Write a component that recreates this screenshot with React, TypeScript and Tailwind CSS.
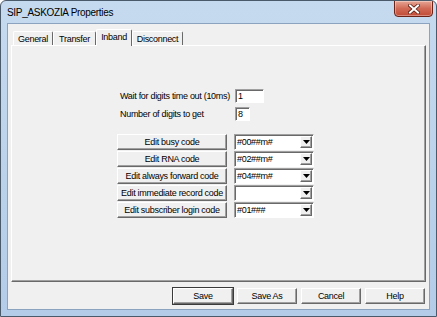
import React from "react";

const raised =
  "bg-[#f0f0f0] border-t border-l border-t-white border-l-white border-r border-b border-r-[#696969] border-b-[#696969] shadow-[inset_-1px_-1px_0_#a0a0a0]";
const sunken =
  "bg-white border-t border-l border-t-[#a0a0a0] border-l-[#a0a0a0] border-r border-b border-r-white border-b-white shadow-[inset_1px_1px_0_#696969]";

function Combo({ value }: { value: string }) {
  return (
    <div className={`${sunken} w-[80px] h-[16px] flex items-center pl-[2px] pr-[1px]`}>
      <div className="flex-1 text-[9px] tracking-[-0.3px] leading-none pt-[1px]">{value}</div>
      <div className={`${raised} w-[12px] h-[12px] flex items-center justify-center`}>
        <svg width="7" height="4" viewBox="0 0 7 4">
          <path d="M0 0 H7 L3.5 4 Z" fill="#000" />
        </svg>
      </div>
    </div>
  );
}

function EditBtn({ label }: { label: string }) {
  return (
    <div className={`${raised} w-[110px] h-[16px] flex items-center justify-center text-[9px] tracking-[-0.3px] leading-none`}>
      {label}
    </div>
  );
}

function Tab({ label, w, selected }: { label: string; w: number; selected?: boolean }) {
  return (
    <div
      style={{ width: w }}
      className={
        selected
          ? "h-[17px] -mb-px bg-[#f0f0f0] border-t border-l border-t-white border-l-white border-r border-r-[#696969] rounded-t-[2px] flex items-start justify-center pt-[2px] text-[9px] tracking-[-0.3px] leading-[11px] relative z-10"
          : "h-[14px] bg-[#f0f0f0] border-t border-l border-t-white border-l-white border-r border-r-[#696969] rounded-t-[2px] flex items-start justify-center pt-[2px] text-[9px] tracking-[-0.3px] leading-[11px]"
      }
    >
      {label}
    </div>
  );
}

function DlgBtn({ label, def }: { label: string; def?: boolean }) {
  return (
    <div
      className={`${raised} w-[60px] h-[16px] flex items-center justify-center text-[9px] tracking-[-0.3px] leading-none ${
        def ? "outline outline-1 outline-[#3a3a3a]" : ""
      }`}
    >
      {label}
    </div>
  );
}

export default function App() {
  return (
    <div className="w-[437px] h-[317px] font-['Liberation_Sans',Arial,sans-serif] text-black bg-white">
      <div className="w-[437px] h-[317px] flex flex-col rounded-t-[6px] border border-[#4b5a6b] bg-gradient-to-b from-[#c6daef] via-[#bcd3eb] to-[#b4cce8] overflow-hidden">
        {/* Title bar */}
        <div className="h-[22px] relative flex items-center pl-[6px] shrink-0">
          <span className="text-[10px] tracking-[-0.3px] leading-none text-black pt-[1px]">SIP_ASKOZIA Properties</span>
          <div className="absolute left-[393px] top-[-1px] w-[39px] h-[17px] rounded-b-[4px] border border-[#6b2318] bg-gradient-to-b from-[#e6a595] via-[#d06a56] to-[#c24b36] flex items-center justify-center shadow-[inset_0_0_0_1px_rgba(255,255,255,0.35)]">
            <svg width="12" height="10" viewBox="0 0 12 10">
              <path d="M2 1.5 L10 8.5 M10 1.5 L2 8.5" stroke="#5a1c12" strokeWidth="3.6" strokeLinecap="square" />
              <path d="M2 1.5 L10 8.5 M10 1.5 L2 8.5" stroke="#ffffff" strokeWidth="2" strokeLinecap="square" />
            </svg>
          </div>
        </div>
        {/* Client */}
        <div className="flex-1 px-[6px] pb-[6px]">
          <div className="w-full h-full border border-[#8ba3bf] bg-[#f0f0f0] flex flex-col">
            {/* Tabs */}
            <div className="h-[16px] mt-[5px] pl-[5px] flex items-end relative z-10">
              <Tab label="General" w={40} />
              <Tab label="Transfer" w={43} />
              <Tab label="Inband" w={36} selected />
              <Tab label="Disconnect" w={51} />
            </div>
            {/* Panel */}
            <div className="ml-[3px] w-[415px] h-[237px] bg-[#f0f0f0] border-t border-l border-t-white border-l-white border-r border-b border-r-[#696969] border-b-[#696969] shadow-[inset_-1px_-1px_0_#a0a0a0] pt-[43px]">
              <div className="pl-[108px] flex flex-col gap-[4px]">
                <div className="flex items-center h-[14px]">
                  <div className="w-[115px] text-[9px] tracking-[-0.3px] leading-none">Wait for digits time out (10ms)</div>
                  <div className={`${sunken} w-[29px] h-[14px] flex items-center pl-[2px] text-[9px] leading-none`}>1</div>
                </div>
                <div className="flex items-center h-[14px]">
                  <div className="w-[115px] text-[9px] tracking-[-0.3px] leading-none">Number of digits to get</div>
                  <div className={`${sunken} w-[15px] h-[14px] flex items-center pl-[2px] text-[9px] leading-none`}>8</div>
                </div>
              </div>
              <div className="pl-[105px] mt-[13px] flex flex-col gap-[1px]">
                {[
                  ["Edit busy code", "#00##m#"],
                  ["Edit RNA code", "#02##m#"],
                  ["Edit always forward code", "#04##m#"],
                  ["Edit immediate record code", ""],
                  ["Edit subscriber login code", "#01###"],
                ].map(([l, v]) => (
                  <div key={l} className="flex items-center gap-[7px]">
                    <EditBtn label={l} />
                    <Combo value={v} />
                  </div>
                ))}
              </div>
            </div>
            {/* Buttons */}
            <div className="mt-[6px] pr-[4px] flex justify-end gap-[4px]">
              <DlgBtn label="Save" def />
              <DlgBtn label="Save As" />
              <DlgBtn label="Cancel" />
              <DlgBtn label="Help" />
            </div>
          </div>
        </div>
      </div>
    </div>
  );
}
